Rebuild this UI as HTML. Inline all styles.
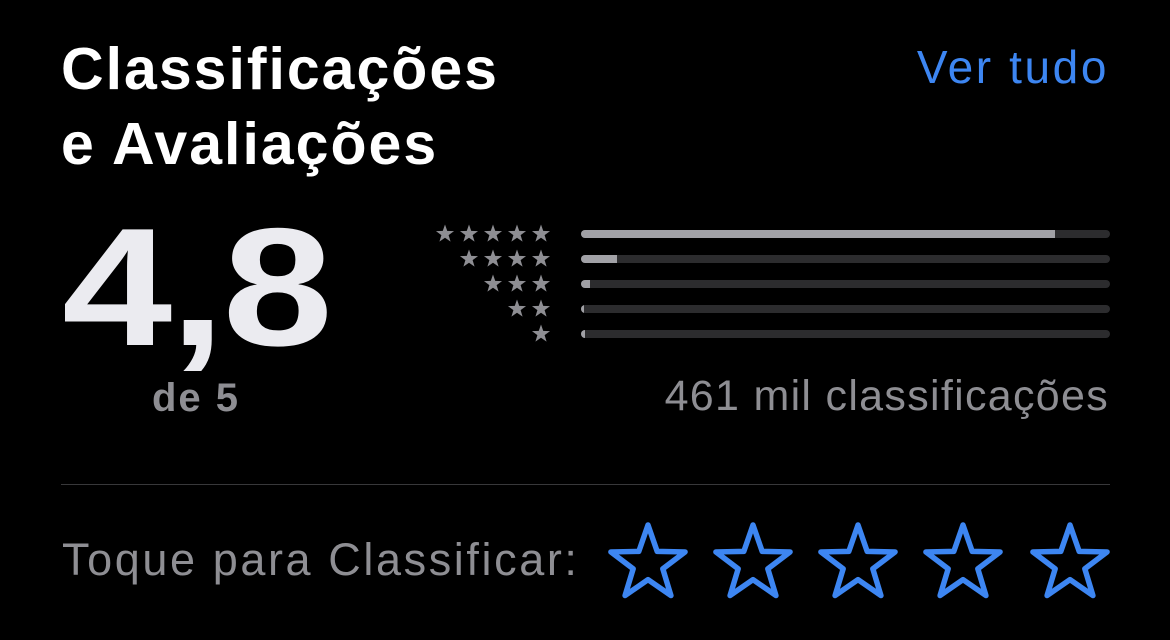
<!DOCTYPE html>
<html><head><meta charset="utf-8"><style>
body{margin:0;width:1170px;height:640px;background:#000;overflow:hidden;font-family:"Liberation Sans",sans-serif;position:relative}
.a{position:absolute;white-space:nowrap}
.bar{position:absolute;left:581px;width:529px;height:8px;border-radius:4px;background:#2c2c2e;overflow:hidden}
.bar i{display:block;height:100%;background:#a1a1a6}
</style></head><body>
<div class="a" style="left:61px;top:32px;font-size:59px;font-weight:bold;color:#fff;line-height:75px;letter-spacing:2px">Classificações<br>e Avaliações</div>
<div class="a" style="right:61px;top:40px;font-size:46px;color:#3d86f2;letter-spacing:2.6px">Ver tudo</div>
<div class="a" style="left:62px;top:192px;font-size:168px;font-weight:bold;color:#ebebf0;letter-spacing:-2px;line-height:190px;transform:scaleX(1.18);transform-origin:left">4,8</div>
<div class="a" style="left:152px;top:376px;font-size:40px;font-weight:bold;color:#8e8e93;letter-spacing:2px">de 5</div>
<div class="a" style="right:61px;top:372px;font-size:43px;color:#8e8e93;letter-spacing:1.3px">461 mil classificações</div>
<div class="a" style="left:61px;top:484px;width:1049px;height:1px;background:#38383a"></div>
<div class="a" style="left:62px;top:534px;font-size:45px;color:#8e8e93;letter-spacing:2.6px">Toque para Classificar:</div>
<svg class="a" style="left:0;top:0" width="1170" height="640">
<defs>
<polygon id="s" points="0,-10 2.35,-3.24 9.51,-3.09 3.8,1.24 5.88,8.09 0,4 -5.88,8.09 -3.8,1.24 -9.51,-3.09 -2.35,-3.24"/>
</defs>
<g fill="#8e8e93">
<use href="#s" transform="translate(445,234) scale(0.95)"/><use href="#s" transform="translate(469,234) scale(0.95)"/><use href="#s" transform="translate(493,234) scale(0.95)"/><use href="#s" transform="translate(517,234) scale(0.95)"/><use href="#s" transform="translate(541,234) scale(0.95)"/>
<use href="#s" transform="translate(469,259) scale(0.95)"/><use href="#s" transform="translate(493,259) scale(0.95)"/><use href="#s" transform="translate(517,259) scale(0.95)"/><use href="#s" transform="translate(541,259) scale(0.95)"/>
<use href="#s" transform="translate(493,284) scale(0.95)"/><use href="#s" transform="translate(517,284) scale(0.95)"/><use href="#s" transform="translate(541,284) scale(0.95)"/>
<use href="#s" transform="translate(517,309) scale(0.95)"/><use href="#s" transform="translate(541,309) scale(0.95)"/>
<use href="#s" transform="translate(541,334) scale(0.95)"/>
</g>
<g fill="none" stroke="#3d86f2" stroke-width="1.4" stroke-linejoin="round">
<use href="#s" transform="translate(648,564) scale(3.9)"/>
<use href="#s" transform="translate(753,564) scale(3.9)"/>
<use href="#s" transform="translate(858,564) scale(3.9)"/>
<use href="#s" transform="translate(963,564) scale(3.9)"/>
<use href="#s" transform="translate(1070,564) scale(3.9)"/>
</g>
</svg>
<div class="bar" style="top:230px"><i style="width:474px"></i></div>
<div class="bar" style="top:255px"><i style="width:36px"></i></div>
<div class="bar" style="top:280px"><i style="width:9px"></i></div>
<div class="bar" style="top:305px"><i style="width:3px"></i></div>
<div class="bar" style="top:330px"><i style="width:4px"></i></div>
</body></html>
